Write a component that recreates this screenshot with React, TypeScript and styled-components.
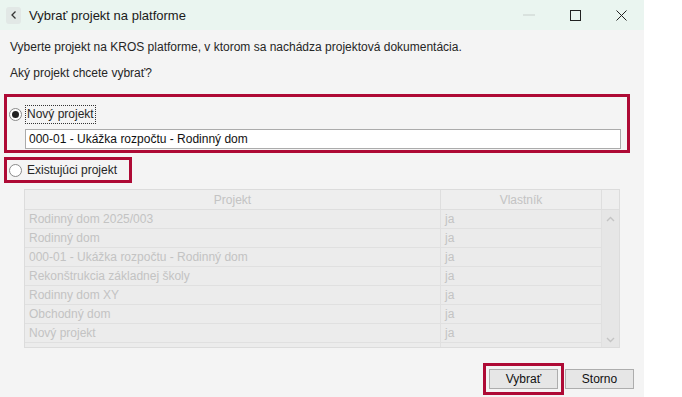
import { Fragment } from "react";
import styled, { createGlobalStyle } from "styled-components";

const GlobalStyle = createGlobalStyle`
  html, body {
    margin: 0;
    padding: 0;
    background: #ffffff;
  }
  body {
    font-family: "Liberation Sans", Arial, sans-serif;
  }
`;

const Window = styled.div`
  width: 644px;
  height: 397px;
  background: #f4f4f4;
  display: flex;
  flex-direction: column;
  overflow: hidden;
`;

const TitleBar = styled.div`
  height: 30px;
  background: #eaf5f0;
  display: flex;
  align-items: center;
  padding-left: 6px;
  box-sizing: border-box;
`;

const BackButton = styled.div`
  width: 15px;
  height: 17px;
  border-radius: 3px;
  background: #e2e8e6;
  display: flex;
  align-items: center;
  justify-content: center;
  margin-right: 8px;
`;

const Title = styled.span`
  font-size: 13px;
  color: #1a1a1a;
  flex: 1;
`;

const Controls = styled.div`
  display: flex;
  align-items: center;
  height: 100%;
`;

const ControlButton = styled.div`
  width: 46px;
  height: 100%;
  display: flex;
  align-items: center;
  justify-content: center;
`;

const Body = styled.div`
  display: flex;
  flex-direction: column;
  padding: 0 0 0 4px;
  font-size: 12px;
  color: #262626;
`;

const Intro = styled.p`
  margin: 0;
  padding-left: 6px;
  line-height: 14px;
  margin-top: ${(p: { top: number }) => p.top}px;
`;

type HighlightProps = {
  top: number;
  width?: number;
  height?: number;
};

const Highlight = styled.div`
  border: 3px solid #ae0a35;
  box-sizing: border-box;
  margin-top: ${(p: HighlightProps) => p.top}px;
  width: ${(p: HighlightProps) => (p.width ? `${p.width}px` : "auto")};
  height: ${(p: HighlightProps) => (p.height ? `${p.height}px` : "auto")};
`;

const NewProjectBox = styled(Highlight)`
  padding: 8px 0 0 0;
`;

const RadioRow = styled.div`
  display: flex;
  align-items: center;
  height: 18px;
  padding-left: 2px;
`;

const RadioCircle = styled.div`
  width: 11px;
  height: 11px;
  border-radius: 50%;
  border: 1px solid #8a8a8a;
  background: #ffffff;
  display: flex;
  align-items: center;
  justify-content: center;
  margin-right: 3px;
  flex-shrink: 0;
`;

const RadioDot = styled.div`
  width: 7px;
  height: 7px;
  border-radius: 50%;
  background: #222;
`;

const RadioLabel = styled.span`
  padding: 1px 1px;
  line-height: 15px;
  border: 1px dotted ${(p: { focused?: boolean }) => (p.focused ? "#333" : "transparent")};
`;

const NameInput = styled.div`
  margin: 6px 0 0 18px;
  width: 596px;
  height: 20px;
  box-sizing: border-box;
  background: #ffffff;
  border: 1px solid #ababab;
  padding-left: 3px;
  line-height: 18px;
  color: #111;
`;

const ExistingBox = styled(Highlight)`
  display: flex;
  align-items: center;
  padding-top: 1px;
`;

const Table = styled.div`
  margin: 6px 0 0 20px;
  width: 596px;
  height: 159px;
  box-sizing: border-box;
  border: 1px solid #dcdcdc;
  background: #ececec;
  display: flex;
  flex-direction: column;
  overflow: hidden;
  color: #c3c3c3;
`;

const Grid = styled.div`
  display: grid;
  grid-template-columns: 416px 161px 1fr;
`;

const HeaderCell = styled.div`
  height: 19px;
  border-bottom: 1px solid #dedede;
  border-right: 1px solid #dedede;
  background: #eeeeee;
  display: flex;
  align-items: center;
  justify-content: center;
  &:last-child {
    border-right: none;
  }
`;

const TableBody = styled.div`
  display: flex;
  flex: 1;
  overflow: hidden;
`;

const Rows = styled.div`
  display: grid;
  grid-template-columns: 416px 161px;
  grid-auto-rows: 19px;
  align-content: start;
`;

const Cell = styled.div`
  border-bottom: 1px solid #e0e0e0;
  border-right: 1px solid #e0e0e0;
  padding-left: 4px;
  display: flex;
  align-items: center;
  white-space: nowrap;
  background: ${(p: { owner?: boolean }) => (p.owner ? "#ebebeb" : "#ececec")};
`;

const Scrollbar = styled.div`
  flex: 1;
  background: #e6e6e6;
  display: flex;
  flex-direction: column;
  justify-content: space-between;
  align-items: center;
  padding: 6px 0 4px;
`;

const Footer = styled.div`
  display: flex;
  justify-content: flex-end;
  align-items: center;
  gap: 1px;
  margin-top: 15px;
  padding-right: 10px;
`;

const ButtonFrame = styled.div`
  border: 3px solid #ae0a35;
  padding: 3px 3px;
  display: flex;
`;

const Button = styled.button`
  width: 69px;
  height: 20px;
  box-sizing: border-box;
  border: 1px solid #adadad;
  background: #e6e6e6;
  font-family: "Liberation Sans", Arial, sans-serif;
  font-size: 12px;
  color: #111;
  padding: 0;
`;

const projects = [
  "Rodinný dom 2025/003",
  "Rodinný dom",
  "000-01 - Ukážka rozpočtu - Rodinný dom",
  "Rekonštrukcia základnej školy",
  "Rodinny dom XY",
  "Obchodný dom",
  "Nový projekt",
  "",
];

const App = () => {
  return (
    <>
      <GlobalStyle />
      <Window>
        <TitleBar>
          <BackButton>
            <svg width="8" height="10" viewBox="0 0 8 10">
              <path d="M5.5 1.5 L2 5 L5.5 8.5" fill="none" stroke="#333" strokeWidth="1.3" />
            </svg>
          </BackButton>
          <Title>Vybrať projekt na platforme</Title>
          <Controls>
            <ControlButton>
              <svg width="12" height="2" viewBox="0 0 12 2">
                <path d="M0 1 H12" stroke="#c8cfcc" strokeWidth="1" />
              </svg>
            </ControlButton>
            <ControlButton>
              <svg width="11" height="11" viewBox="0 0 11 11">
                <rect x="0.5" y="0.5" width="10" height="10" fill="none" stroke="#222" strokeWidth="1" />
              </svg>
            </ControlButton>
            <ControlButton>
              <svg width="11" height="11" viewBox="0 0 11 11">
                <path d="M0.5 0.5 L10.5 10.5 M10.5 0.5 L0.5 10.5" stroke="#222" strokeWidth="1" />
              </svg>
            </ControlButton>
          </Controls>
        </TitleBar>
        <Body>
          <Intro top={10}>
            Vyberte projekt na KROS platforme, v ktorom sa nachádza projektová dokumentácia.
          </Intro>
          <Intro top={12}>Aký projekt chcete vybrať?</Intro>
          <NewProjectBox top={14} width={626} height={59}>
            <RadioRow>
              <RadioCircle>
                <RadioDot />
              </RadioCircle>
              <RadioLabel focused>Nový projekt</RadioLabel>
            </RadioRow>
            <NameInput>000-01 - Ukážka rozpočtu - Rodinný dom</NameInput>
          </NewProjectBox>
          <ExistingBox top={4} width={128} height={26}>
            <RadioRow>
              <RadioCircle />
              <RadioLabel>Existujúci projekt</RadioLabel>
            </RadioRow>
          </ExistingBox>
          <Table>
            <Grid>
              <HeaderCell>Projekt</HeaderCell>
              <HeaderCell>Vlastník</HeaderCell>
              <HeaderCell />
            </Grid>
            <TableBody>
              <Rows>
                {projects.map((name, i) => (
                  <Fragment key={i}>
                    <Cell>{name}</Cell>
                    <Cell owner>{name ? "ja" : ""}</Cell>
                  </Fragment>
                ))}
              </Rows>
              <Scrollbar>
                <svg width="9" height="6" viewBox="0 0 9 6">
                  <path d="M1 5 L4.5 1.5 L8 5" fill="none" stroke="#c4c4c4" strokeWidth="1.4" />
                </svg>
                <svg width="9" height="6" viewBox="0 0 9 6">
                  <path d="M1 1 L4.5 4.5 L8 1" fill="none" stroke="#c4c4c4" strokeWidth="1.4" />
                </svg>
              </Scrollbar>
            </TableBody>
          </Table>
          <Footer>
            <ButtonFrame>
              <Button>Vybrať</Button>
            </ButtonFrame>
            <Button>Storno</Button>
          </Footer>
        </Body>
      </Window>
    </>
  );
};

export default App;
